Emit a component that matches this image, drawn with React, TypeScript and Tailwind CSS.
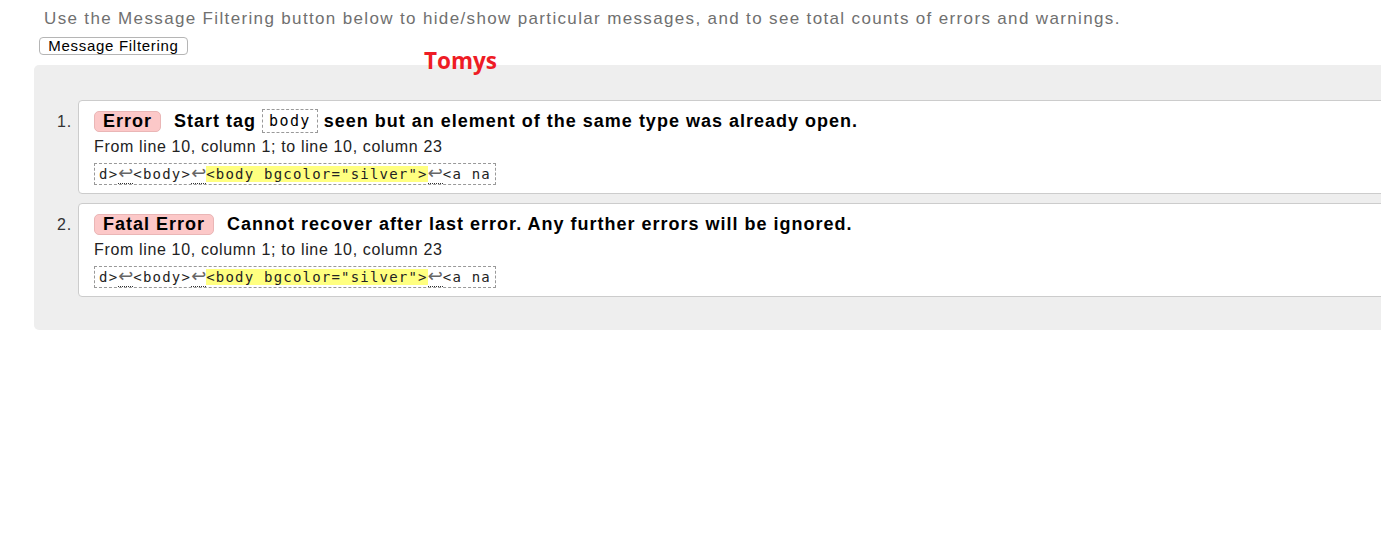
import React from "react";

const Ret = () => (
  <span className="font-['DejaVu_Sans',sans-serif] text-[18px] leading-[16px] tracking-normal text-[#666] border-b border-dotted border-[#333]">↩</span>
);

const Extract = () => (
  <div className="mt-[5px]">
    <code className="inline-block border border-dashed border-[#999] px-[4px] font-['DejaVu_Sans_Mono',monospace] text-[14px] leading-[20px] text-[#222] whitespace-pre tracking-[1.2px]">
      d&gt;<Ret />&lt;body&gt;<Ret />
      <mark className="bg-[#ffff80] text-[#222]">&lt;body bgcolor="silver"&gt;</mark>
      <Ret />&lt;a na
    </code>
  </div>
);

type Item = { n: number; badge: string; msg: React.ReactNode };

const items: Item[] = [
  {
    n: 1,
    badge: "Error",
    msg: (
      <>
        Start tag{" "}
        <code className="inline-block border border-dashed border-[#999] px-[6px] font-['DejaVu_Sans_Mono',monospace] font-normal text-[15px] leading-[22px] tracking-[1.4px] align-middle -mt-[2px]">
          body
        </code>{" "}
        seen but an element of the same type was already open.
      </>
    ),
  },
  {
    n: 2,
    badge: "Fatal Error",
    msg: <>Cannot recover after last error. Any further errors will be ignored.</>,
  },
];

export default function App() {
  return (
    <div className="relative w-[1381px] h-[540px] overflow-hidden bg-white font-['Liberation_Sans',Arial,sans-serif]">
      <p className="pl-[44px] pt-[9px] text-[17px] leading-[20px] text-[#707070] tracking-[1.35px]">
        Use the Message Filtering button below to hide/show particular messages, and to see total counts of errors and warnings.
      </p>
      <div className="pl-[39px] h-[26px] flex items-end">
        <button className="h-[18px] w-[149px] border border-[#b5b5b5] rounded-[4px] bg-white text-[15px] leading-[16px] text-black tracking-[0.7px]">
          Message Filtering
        </button>
      </div>
      <div className="absolute left-[424px] top-[46px] text-[22.5px] font-bold text-[#ee1c25] font-['Open_Sans',sans-serif] leading-[30px] z-10">
        Tomys
      </div>
      <div className="ml-[34px] mt-[10px] w-[1420px] bg-[#eeeeee] rounded-l-[5px] pt-[35px] pb-[33px]">
        <ol className="flex flex-col gap-[9px]">
          {items.map((it) => (
            <li key={it.n} className="flex items-start">
              <span className="w-[38px] text-right pt-[12px] text-[16px] leading-[20px] text-[#333] tracking-[0.8px]">
                {it.n}.
              </span>
              <div className="ml-[6px] flex-1 h-[94px] bg-white border border-[#cccccc] rounded-[4px] pl-[15px] pt-[10px]">
                <div className="flex items-center h-[21px] text-[18px] font-bold text-black tracking-[1px]">
                  <span className="inline-block bg-[#fcc8c8] border border-[#eab6b6] rounded-[5px] px-[8px] leading-[19px] mr-[13px]">
                    {it.badge}
                  </span>
                  <span>{it.msg}</span>
                </div>
                <div className="mt-[5px] text-[16px] leading-[20px] text-[#222] tracking-[0.65px]">
                  From line 10, column 1; to line 10, column 23
                </div>
                <Extract />
              </div>
            </li>
          ))}
        </ol>
      </div>
    </div>
  );
}
